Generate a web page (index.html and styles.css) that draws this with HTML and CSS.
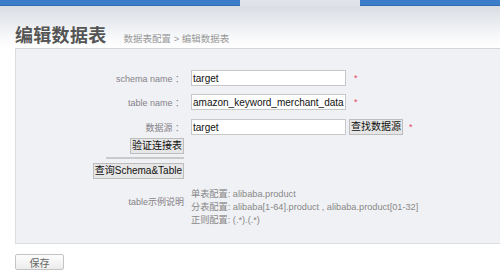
FILE: index.html
```html
<!DOCTYPE html>
<html lang="zh-CN">
<head>
    <meta charset="UTF-8">
    <title>编辑数据表</title>
    <link rel="stylesheet" href="styles.css">
</head>
<body>
<div class="topnav">
    <div class="nav-blue nav-left"></div>
    <div class="nav-tab"></div>
    <div class="nav-blue nav-right"></div>
</div>

<div class="page-head">
    <h1 class="title">编辑数据表</h1>
    <span class="crumbs">数据表配置 &gt; 编辑数据表</span>
</div>

<div class="panel">
    <div class="row">
        <label class="label">schema name ：</label>
        <input class="field" type="text" value="target">
        <span class="star">*</span>
    </div>
    <div class="row">
        <label class="label">table name ：</label>
        <input class="field" type="text" value="amazon_keyword_merchant_data">
        <span class="star">*</span>
    </div>
    <div class="row row-source">
        <label class="label">数据源 ：</label>
        <input class="field" type="text" value="target">
        <button class="btn">查找数据源</button>
        <span class="star">*</span>
    </div>
    <div class="row row-btn">
        <div class="label"><button class="btn">验证连接表</button></div>
    </div>
    <div class="row row-rule">
        <div class="label"><span class="rule"></span></div>
    </div>
    <div class="row row-btn">
        <div class="label"><button class="btn">查询Schema&amp;Table</button></div>
    </div>
    <div class="row row-help">
        <div class="label help-label">table示例说明</div>
        <div class="help">
            <div>单表配置: alibaba.product</div>
            <div>分表配置: alibaba[1-64].product , alibaba.product[01-32]</div>
            <div>正则配置: (.*).(.*)</div>
        </div>
    </div>
</div>

<div class="actions">
    <button class="save">保存</button>
</div>
</body>
</html>
```

FILE: styles.css
```css
* {
    margin: 0;
    padding: 0;
    box-sizing: border-box;
}

body {
    font-family: 'Liberation Sans', 'Noto Sans CJK SC', sans-serif;
    background-color: #fff;
    color: #333;
    width: 500px;
    overflow: hidden;
}

.topnav {
    display: flex;
    height: 6px;
}

.nav-blue {
    background-color: #3b7dc9;
    border-bottom: 1px solid #2f6db5;
}

.nav-left {
    width: 240px;
}

.nav-tab {
    width: 120px;
    background-color: #dfe2e7;
}

.nav-right {
    flex: 1;
}

.page-head {
    display: flex;
    align-items: baseline;
    height: 42px;
    padding: 15px 0 0 15px;
    background: linear-gradient(#d9dde3, #f6f7f9 70%, #fff);
}

.title {
    font-size: 18px;
    font-weight: bold;
    color: #555;
    letter-spacing: 0.3px;
}

.crumbs {
    margin-left: 17px;
    font-size: 9.5px;
    color: #999;
}

.panel {
    margin-left: 15px;
    height: 196px;
    padding-top: 21px;
    background-color: #f0f1f4;
    border: 1px solid #dcdde0;
    border-right: none;
    border-top-color: #d4d5d8;
}

.row {
    display: flex;
    align-items: center;
    height: 16px;
    margin-bottom: 8px;
}

.row:nth-child(2) {
    margin-bottom: 9px;
}

.label {
    width: 169px;
    flex-shrink: 0;
    padding-right: 1px;
    text-align: right;
    font-size: 9px;
    color: #858189;
}

.field {
    width: 155px;
    height: 16px;
    margin-left: 6px;
    padding: 0 1px;
    border: 1px solid #c8c8c8;
    background-color: #fff;
    font-family: inherit;
    font-size: 10px;
    color: #111;
    outline: none;
}

.star {
    margin-left: 8px;
    font-size: 9px;
    color: #e4415f;
}

.row-source {
    margin-bottom: 3px;
}

.row-source .star {
    margin-left: 6px;
}

.btn {
    height: 16px;
    margin-left: 3px;
    padding: 0 1px;
    border: 1px solid #bdbdbd;
    background-color: #e6e6e6;
    font-family: inherit;
    font-size: 10px;
    color: #111;
    line-height: 14px;
}

.row-btn .btn {
    margin-left: 0;
}

.row-btn {
    margin-bottom: 0;
}

.row-rule {
    height: 2px;
    margin: 3px 0 4px;
}

.rule {
    display: block;
    width: 78px;
    height: 2px;
    margin-left: auto;
    background-color: #c9cacc;
}

.row-help {
    align-items: flex-start;
    height: auto;
    margin-top: 9px;
}

.help-label {
    padding-top: 7px;
}

.help {
    margin-left: 6px;
    font-size: 9.2px;
    line-height: 13px;
    color: #888;
}

.actions {
    padding: 9px 0 0 15px;
}

.save {
    width: 49px;
    height: 16px;
    border: 1px solid #c4c4c4;
    border-radius: 2px;
    background: linear-gradient(#fdfdfd, #ececec);
    font-family: inherit;
    font-size: 10px;
    color: #666;
}
```
